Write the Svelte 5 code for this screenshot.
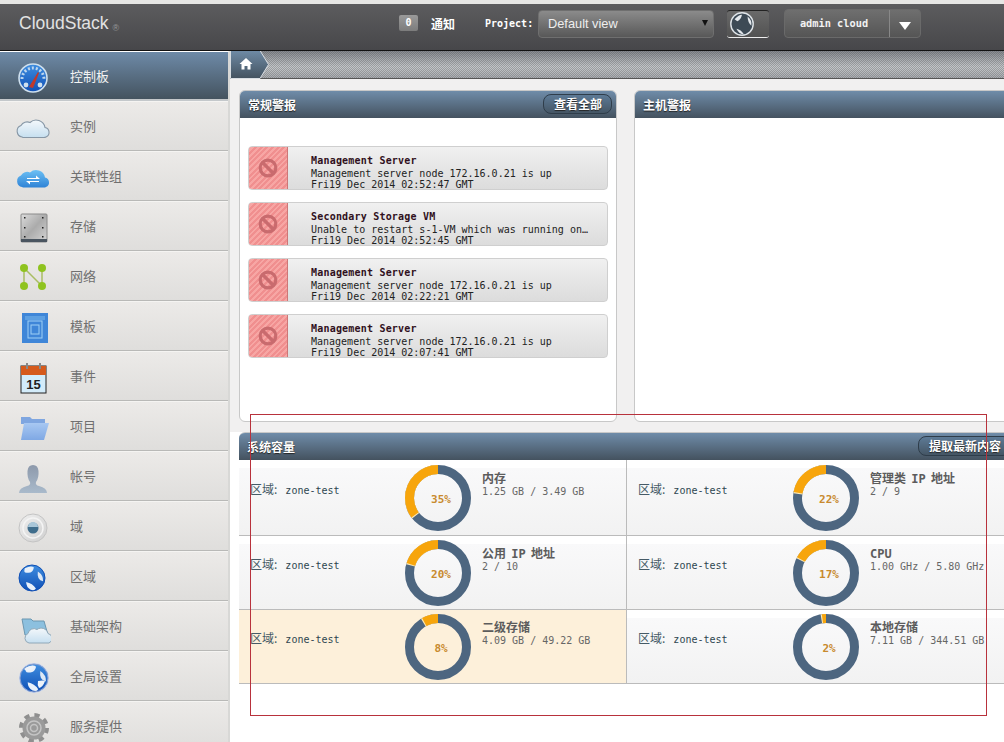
<script>
  const nav = [
    { id: "gauge", label: "控制板", active: true },
    { id: "cloud", label: "实例" },
    { id: "affinity", label: "关联性组" },
    { id: "disk", label: "存储" },
    { id: "network", label: "网络" },
    { id: "template", label: "模板" },
    { id: "calendar", label: "事件" },
    { id: "folder", label: "项目" },
    { id: "user", label: "帐号" },
    { id: "domain", label: "域" },
    { id: "region", label: "区域" },
    { id: "infra", label: "基础架构" },
    { id: "globe", label: "全局设置" },
    { id: "gear", label: "服务提供" }
  ];

  const alerts = [
    { title: "Management Server", text: "Management server node 172.16.0.21 is up", date: "Fri19 Dec 2014 02:52:47 GMT" },
    { title: "Secondary Storage VM", text: "Unable to restart s-1-VM which was running on…", date: "Fri19 Dec 2014 02:52:45 GMT" },
    { title: "Management Server", text: "Management server node 172.16.0.21 is up", date: "Fri19 Dec 2014 02:22:21 GMT" },
    { title: "Management Server", text: "Management server node 172.16.0.21 is up", date: "Fri19 Dec 2014 02:07:41 GMT" }
  ];

  const capacity = [
    { title: "内存", sub: "1.25 GB / 3.49 GB", pct: 35 },
    { title: "管理类 IP 地址", sub: "2 / 9", pct: 22 },
    { title: "公用 IP 地址", sub: "2 / 10", pct: 20 },
    { title: "CPU", sub: "1.00 GHz / 5.80 GHz", pct: 17 },
    { title: "二级存储", sub: "4.09 GB / 49.22 GB", pct: 8, warn: true },
    { title: "本地存储", sub: "7.11 GB / 344.51 GB", pct: 2 }
  ];

  const R = 28.5;
  const C = 2 * Math.PI * R;
</script>

{#snippet globeShape(cx, cy, r, rim)}
  <circle {cx} {cy} {r} fill="url(#gBlue)" stroke={rim} stroke-width="1" />
  <path d="M{cx - r * 0.55} {cy - r * 0.75}q{r * 0.5} {-r * 0.25} {r * 0.7} {-r * 0.05}q{-r * 0.1} {r * 0.45} {-r * 0.5} {r * 0.4}q{-r * 0.35} {r * 0.05} {-r * 0.2} {-r * 0.35}z" fill="#e8f0fa" />
  <path d="M{cx + r * 0.45} {cy - r * 0.5}q{r * 0.45} {r * 0.3} {r * 0.4} {r * 0.75}q{-r * 0.5} {-r * 0.1} {-r * 0.4} {-r * 0.75}z" fill="#dde8f5" />
  <path d="M{cx - r * 0.45} {cy + r * 0.3}q{r * 0.5} {r * 0.1} {r * 0.75} {r * 0.5}q{-r * 0.1} {r * 0.2} {-r * 0.4} {r * 0.1}q{-r * 0.35} {-r * 0.2} {-r * 0.35} {-r * 0.6}z" fill="#e8f0fa" />
{/snippet}

{#snippet icon(id)}
  <svg class="nav-icon" viewBox="0 0 36 36" width="36" height="36" aria-hidden="true">
    {#if id === "gauge"}
      <circle cx="18" cy="18" r="14" fill="url(#gBlue)" stroke="#cfe0ee" stroke-width="1.6" />
      <path d="M7 19a11 11 0 0 1 22 0" fill="none" stroke="#bcd6ee" stroke-width="3" stroke-dasharray="2 2" />
      <path d="M14 27l9-15 1 1-6 15z" fill="#c0392b" />
      <circle cx="11" cy="25" r="2.4" fill="#cfe0ee" />
      <circle cx="25" cy="25" r="2.4" fill="#cfe0ee" />
    {:else if id === "cloud"}
      <path d="M7 27a6 6 0 0 1-1-11.500a7 7 0 0 1 9-3a9 9 0 0 1 15 5a5 5 0 0 1 1 9.500q-1 .5-2 .5H8z" fill="url(#gCloud)" stroke="#8797a6" stroke-width="1.100" />
    {:else if id === "affinity"}
      <path d="M7 27a6 6 0 0 1-1-11.500a7 7 0 0 1 9-3a9 9 0 0 1 15 5a5 5 0 0 1 1 9.500q-1 .5-2 .5H8z" fill="url(#gSky)" />
      <path d="M12 18h9v-2.500l4 3.500H12zM24 22h-9v2.500l-4-3.500h13z" fill="#fff" />
    {:else if id === "disk"}
      <rect x="6" y="4" width="26" height="28" rx="1" fill="url(#gDisk)" stroke="#8a8a8a" />
      <rect x="6" y="29" width="26" height="3" fill="#4a5560" />
      <g fill="#222"><rect x="9" y="7" width="1.500" height="1.500" /><rect x="27" y="7" width="1.500" height="1.500" /><rect x="9" y="17" width="1.500" height="1.500" /><rect x="27" y="17" width="1.500" height="1.500" /><rect x="9" y="26" width="1.500" height="1.500" /><rect x="27" y="26" width="1.500" height="1.500" /></g>
    {:else if id === "network"}
      <path d="M9 8v18M9 8l18 18M27 8v18" stroke="#a9bd63" stroke-width="1.500" fill="none" />
      <g fill="#8fc31f"><circle cx="9" cy="8" r="4" /><circle cx="27" cy="8" r="4" /><circle cx="9" cy="26" r="4" /><circle cx="27" cy="26" r="4" /></g>
    {:else if id === "template"}
      <rect x="7" y="3" width="26" height="30" fill="#3f86d8" />
      <path d="M10 7h20M10 9h20" stroke="#8cc6f2" stroke-width=".8" />
      <rect x="13" y="11" width="14" height="17" fill="none" stroke="#9fd0f5" />
      <rect x="16" y="15" width="8" height="9" fill="none" stroke="#9fd0f5" />
    {:else if id === "calendar"}
      <rect x="6" y="6" width="25" height="27" fill="#d3ecfa" stroke="#222" />
      <rect x="6" y="6" width="25" height="9" fill="#d55a1c" />
      <rect x="11" y="3" width="2" height="6" fill="#888" />
      <rect x="24" y="3" width="2" height="6" fill="#888" />
      <text class="cal" x="18.500" y="29">15</text>
    {:else if id === "folder"}
      <path d="M6 7h9l2 2h13v5H6z" fill="#7fa6e0" />
      <path d="M9 13h25l-5 17H6z" fill="url(#gFolder)" />
    {:else if id === "user"}
      <path d="M4 33q0-5 8-7 4-1 3-4-3-4-2.500-11 .5-6 5.500-6t5.500 6q.5 7-2.500 11-1 3 3 4 8 2 8 7z" fill="url(#gUser)" />
    {:else if id === "domain"}
      <circle cx="18" cy="18" r="14" fill="url(#gDisc)" stroke="#c4c4c4" />
      <circle cx="18" cy="18" r="10" fill="none" stroke="#f4f4f4" stroke-width="1.500" />
      <circle cx="18" cy="18" r="5.500" fill="#3f6d8c" />
      <path d="M13 17a5 5 0 0 1 10 0z" fill="#a9c6d8" />
    {:else if id === "region"}
      {@render globeShape(17, 18, 13, "#0f4fb5")}
    {:else if id === "infra"}
      <path d="M7 9h9l2 2h11l4 14H10z" fill="#8cc0df" stroke="#6d97b0" />
      <path d="M14 33a5 5 0 0 1-1-9.500a6 6 0 0 1 9-4a7 7 0 0 1 11 4a5 5 0 0 1 1 9.500z" fill="url(#gCloud)" stroke="#90a8b8" />
    {:else if id === "globe"}
      <circle cx="19" cy="18" r="15" fill="#c9d6ee" />
      {@render globeShape(19, 18, 14, "#8aa0d0")}
      <path d="M9 9q6-4 10-3-1 4-4 4-2 3-6-1zM23 21q5-1 7 0-2 6-6 7-2-3-1-7z" fill="#eef3fa" />
    {:else if id === "gear"}
      <circle cx="19" cy="18" r="12.500" fill="none" stroke="#8f8f8f" stroke-width="5" stroke-dasharray="5 4.820" />
      <circle cx="19" cy="18" r="11.500" fill="#9a9a9a" />
      <circle cx="19" cy="18" r="7" fill="none" stroke="#c4c4c4" stroke-width="1.500" />
      <circle cx="19" cy="18" r="3.500" fill="none" stroke="#c4c4c4" stroke-width="1.500" />
    {/if}
  </svg>
{/snippet}

<div class="page">
  <svg class="defs" width="0" height="0" aria-hidden="true">
    <defs>
      <linearGradient id="gBlue" x1="0" y1="0" x2="0" y2="1"><stop offset="0" stop-color="#3f8ee0" /><stop offset="1" stop-color="#0f4fb5" /></linearGradient>
      <linearGradient id="gCloud" x1="0" y1="0" x2="0" y2="1"><stop offset="0" stop-color="#f4f8fb" /><stop offset="1" stop-color="#c6dff0" /></linearGradient>
      <linearGradient id="gSky" x1="0" y1="0" x2="0" y2="1"><stop offset="0" stop-color="#6cc0f4" /><stop offset="1" stop-color="#2f83d6" /></linearGradient>
      <linearGradient id="gDisk" x1="0" y1="0" x2="1" y2="1"><stop offset="0" stop-color="#dcdcdc" /><stop offset=".5" stop-color="#ababab" /><stop offset="1" stop-color="#d4d4d4" /></linearGradient>
      <linearGradient id="gFolder" x1="0" y1="0" x2="0" y2="1"><stop offset="0" stop-color="#a8c8f2" /><stop offset="1" stop-color="#7fa8e4" /></linearGradient>
      <linearGradient id="gUser" x1="0" y1="0" x2="0" y2="1"><stop offset="0" stop-color="#8d99ab" /><stop offset="1" stop-color="#a9bacb" /></linearGradient>
      <linearGradient id="gDisc" x1="0" y1="0" x2="1" y2="1"><stop offset="0" stop-color="#f0f0f0" /><stop offset="1" stop-color="#cfcfcf" /></linearGradient>
      <linearGradient id="gTab" x1="0" y1="0" x2="0" y2="1"><stop offset="0" stop-color="#6f8ba6" /><stop offset="1" stop-color="#43525f" /></linearGradient>
    </defs>
  </svg>

  <header class="topbar">
    <div class="logo">CloudStack<span class="reg">®</span></div>
    <div class="notify"><span class="badge">0</span><span class="notify-label">通知</span></div>
    <span class="project-label">Project:</span>
    <div class="select">Default view<span class="select-arrow"></span></div>
    <div class="zone-btn">
      <svg viewBox="0 0 30 30" width="28" height="28" aria-hidden="true">
        <circle cx="15" cy="15" r="12" fill="#3d4a55" stroke="#dfe4e8" stroke-width="1.500" />
        <path d="M7 10q4-5 8-5-1 5-5 7zM21 7q5 4 4 10-4-4-4-10zM9 20q5 1 8 6-5 0-8-6z" fill="#e4e8ec" />
      </svg>
    </div>
    <div class="user-btn">
      <span class="user-name">admin cloud</span>
      <span class="user-arrow"></span>
    </div>
  </header>

  <div class="layout">
    <nav class="sidebar">
      {#each nav as item}
        <div class="nav-item" class:active={item.active}>
          {@render icon(item.id)}
          <span>{item.label}</span>
        </div>
      {/each}
    </nav>

    <main class="content">
      <div class="breadcrumb">
        <svg class="home-tab" viewBox="0 0 40 29" width="40" height="29" aria-hidden="true">
          <path d="M.5 .5H30L38.500 14.500 30 28.500H.5z" fill="url(#gTab)" stroke="#d8dde2" />
          <path d="M16 8l6.500 6h-2v5.500h-3V16h-3v3.500h-3V14h-2z" fill="#fff" />
        </svg>
      </div>

      <div class="alert-panels">
        <section class="panel">
          <div class="panel-head">
            <h2>常规警报</h2>
            <button class="head-btn">查看全部</button>
          </div>
          <div class="alert-list">
            {#each alerts as a}
              <div class="alert">
                <div class="alert-flag">
                  <svg viewBox="0 0 24 24" width="22" height="22" aria-hidden="true">
                    <circle cx="12" cy="12" r="8.500" fill="none" stroke="#c96b6e" stroke-width="3.500" />
                    <path d="M6 6l12 12" stroke="#c96b6e" stroke-width="3.500" />
                  </svg>
                </div>
                <div class="alert-text">
                  <strong>{a.title}</strong>
                  <span>{a.text}</span>
                  <span>{a.date}</span>
                </div>
              </div>
            {/each}
          </div>
        </section>

        <section class="panel">
          <div class="panel-head"><h2>主机警报</h2></div>
        </section>
      </div>

      <section class="capacity">
        <div class="panel-head">
          <h2>系统容量</h2>
          <button class="head-btn">提取最新内容</button>
        </div>
        <div class="capacity-grid">
          {#each capacity as c}
            <div class="cap-cell" class:warn={c.warn}>
              <div class="cap-zone"><span class="zone-cn">区域:</span> zone-test</div>
              <svg class="donut" viewBox="0 0 66 66" width="66" height="66" role="img" aria-label="{c.pct}%">
                <circle cx="33" cy="33" r={R} fill="none" stroke="#4d6680" stroke-width="9" />
                <g transform="translate(66 0) scale(-1 1) rotate(-90 33 33)">
                  <circle cx="33" cy="33" r={R} fill="none" stroke="#fbe7b4" stroke-width="9" stroke-dasharray="{(c.pct / 100) * C + 2.2} {C}" stroke-dashoffset="1.100" />
                  <circle cx="33" cy="33" r={R} fill="none" stroke="#f7a50c" stroke-width="9" stroke-dasharray="{(c.pct / 100) * C} {C}" />
                </g>
                <text class="pct" x="36" y="38">{c.pct}%</text>
              </svg>
              <div class="cap-info">
                <h3>{c.title}</h3>
                <p>{c.sub}</p>
              </div>
            </div>
          {/each}
        </div>
      </section>
    </main>
  </div>

  <div class="marker"></div>
</div>

<style>
  :global(body) {
    margin: 0;
    background: #fff;
  }
  .page {
    position: relative;
    width: 1004px;
    height: 742px;
    overflow: hidden;
    display: flex;
    flex-direction: column;
    font-family: "DejaVu Sans Mono", "Noto Sans CJK SC", monospace;
  }
  .defs {
    position: absolute;
  }

  /* top bar */
  .topbar {
    flex: none;
    height: 46px;
    box-sizing: content-box;
    border-top: 4px solid #e6e6e4;
    border-bottom: 1px solid #111;
    background: linear-gradient(#5c5c5e, #47474a);
    display: flex;
    align-items: center;
    color: #fff;
  }
  .logo {
    margin-left: 19px;
    width: 380px;
    font: 17.5px "Liberation Sans", sans-serif;
    color: #e2e2e2;
    position: relative;
    top: -4px;
  }
  .reg {
    font-size: 9px;
    color: #999;
    margin-left: 4px;
    position: relative;
    top: 2px;
  }
  .notify {
    display: flex;
    align-items: center;
    gap: 13px;
    width: 86px;
    position: relative;
    top: -4px;
  }
  .badge {
    width: 19px;
    height: 16px;
    background: linear-gradient(#9a9a9a, #7c7c7c);
    border-radius: 2px;
    font-size: 10px;
    font-weight: bold;
    text-align: center;
    line-height: 16px;
  }
  .notify-label {
    font: bold 12px "Noto Sans CJK SC", sans-serif;
  }
  .project-label {
    width: 53px;
    font-size: 10px;
    font-weight: bold;
    position: relative;
    top: -4px;
  }
  .select {
    box-sizing: border-box;
    width: 176px;
    height: 28px;
    margin-top: -7px;
    padding-left: 9px;
    border: 1px solid #6f6f6f;
    border-radius: 4px;
    background: linear-gradient(#8b8b8b, #585858);
    font: 12.800px/26px "Liberation Sans", sans-serif;
    color: #eee;
    position: relative;
  }
  .select-arrow {
    position: absolute;
    right: 5px;
    top: 9px;
    border: 3.5px solid transparent;
    border-top: 6px solid #111;
  }
  .zone-btn {
    box-sizing: border-box;
    width: 42px;
    height: 28px;
    margin: -7px 0 0 13px;
    border-top: 1px solid #222;
    border-bottom: 1px solid #eee;
    border-radius: 3px;
    background: linear-gradient(#6a6a6a, #525252);
    display: flex;
    align-items: center;
    padding-left: 1px;
  }
  .user-btn {
    box-sizing: border-box;
    width: 137px;
    height: 29px;
    margin: -7px 0 0 15px;
    border: 1px solid #6a6a6a;
    border-radius: 4px;
    background: linear-gradient(#6f6f6f, #555);
    display: flex;
    align-items: center;
    position: relative;
  }
  .user-name {
    box-sizing: border-box;
    width: 105px;
    height: 27px;
    padding-right: 6px;
    line-height: 27px;
    text-align: center;
    font-size: 10.300px;
    font-weight: bold;
    border-right: 1px solid #888;
    color: #f2f2f2;
  }
  .user-arrow {
    margin: 5px 0 0 9px;
    border: 6px solid transparent;
    border-top: 8px solid #fff;
    border-bottom: 0;
  }

  /* sidebar */
  .layout {
    flex: 1;
    display: flex;
    min-height: 0;
  }
  .sidebar {
    flex: none;
    width: 228px;
    border-right: 2px solid #d8d8d6;
    border-top: 1px solid #fff;
  }
  .nav-item {
    box-sizing: border-box;
    height: 50px;
    padding: 3px 0 0 15px;
    display: flex;
    align-items: center;
    gap: 19px;
    background: linear-gradient(#eceae8, #dfdedc);
    border-top: 1px solid #f5f4f2;
    border-bottom: 1px solid #b9b9b7;
    font: 13px "Noto Sans CJK SC", sans-serif;
    color: #707070;
  }
  .nav-item span {
    margin-top: -4px;
  }
  .nav-item.active {
    height: 49px;
    background: linear-gradient(#6d89a6, #44535f);
    color: #f4f4f4;
    border-top-color: #6d89a6;
    border-bottom: 2px solid #c4c8cb;
  }
  .nav-icon {
    flex: none;
  }
  .cal {
    font: bold 13px "Liberation Sans", sans-serif;
    fill: #222;
    text-anchor: middle;
  }

  /* main */
  .content {
    flex: 1;
    min-width: 0;
    overflow: hidden;
    background: linear-gradient(#f1f0f0 381px, #fff 381px);
  }
  .breadcrumb {
    height: 28px;
    margin-top: -1px;
    border-bottom: 1px solid #555;
    background:
      repeating-conic-gradient(rgba(70, 70, 70, 0.3) 0 25%, transparent 0 50%) 0 0 / 2px 2px,
      linear-gradient(#80848a, #c4c7ca 60%, #a9acb0);
  }
  .home-tab {
    display: block;
  }
  .alert-panels {
    margin: 11px 0 0 9px;
    display: grid;
    grid-template-columns: 378px 400px;
    column-gap: 17px;
  }
  .panel {
    box-sizing: border-box;
    height: 332px;
    background: #fff;
    border: 1px solid #c8c8c8;
    border-radius: 6px;
    overflow: hidden;
  }
  .panel-head {
    height: 27px;
    padding: 0 4px 0 8px;
    display: flex;
    align-items: center;
    justify-content: space-between;
    background: linear-gradient(#6f8ca9, #44525f);
  }
  h2 {
    margin: 0;
    font: bold 12px "Noto Sans CJK SC", sans-serif;
    color: #fff;
    text-shadow: 0 1px 1px #222;
  }
  .head-btn {
    height: 20px;
    margin-top: -2px;
    padding: 0 9px 0 10px;
    border: 1px solid #2f3d4a;
    border-radius: 8px;
    background: linear-gradient(#5d7a96, #455665);
    font: bold 12px "Noto Sans CJK SC", sans-serif;
    color: #fff;
    text-shadow: 0 1px 1px #222;
  }
  .alert-list {
    padding: 28px 8px 0;
    display: flex;
    flex-direction: column;
    gap: 12px;
  }
  .alert {
    box-sizing: border-box;
    height: 44px;
    display: flex;
    border: 1px solid #cfcfcf;
    border-radius: 4px;
    background: linear-gradient(#f0f0f0, #dcdcdc);
    overflow: hidden;
  }
  .alert-flag {
    flex: none;
    width: 38px;
    display: flex;
    align-items: center;
    justify-content: center;
    border-right: 1px solid #c77;
    background:
      repeating-linear-gradient(135deg, #f08f8f 0 2px, #f7a6a4 2px 4px);
  }
  .alert-text {
    padding: 8px 0 0 23px;
    display: flex;
    flex-direction: column;
    font-size: 10px;
    line-height: 11.500px;
    color: #222;
    white-space: nowrap;
  }
  .alert-text strong {
    color: #301020;
    margin-bottom: 1px;
    letter-spacing: 0.2px;
  }
  .alert-text span {
    line-height: 11px;
  }

  /* capacity */
  .capacity {
    width: 776px;
    margin: 10px 0 0 9px;
    border-top: 1px solid #c8c8c8;
    border-radius: 6px 0 0 0;
    overflow: hidden;
    background: #fff;
  }
  .capacity-grid {
    display: grid;
    grid-template-columns: 388px 388px;
  }
  .cap-cell {
    box-sizing: border-box;
    height: 74px;
    display: flex;
    padding-top: 4px;
    background: linear-gradient(#fff 8px, #f9f9fa 8px, #f2f2f2);
    border-bottom: 1px solid #bbb;
  }
  .cap-cell:nth-child(odd) {
    border-right: 1px solid #bbb;
  }
  .cap-cell:nth-child(-n + 2) {
    height: 76px;
    padding-top: 5px;
  }
  .cap-cell.warn {
    background: #fdf0da;
  }
  .cap-zone {
    box-sizing: border-box;
    flex: none;
    width: 166px;
    padding: 15px 0 0 11px;
    font-size: 10px;
    color: #2d4650;
  }
  .zone-cn {
    font: 12px "Noto Sans CJK SC", sans-serif;
    color: #455a66;
    margin-right: 2px;
  }
  .donut {
    flex: none;
  }
  .pct {
    font: bold 11px "DejaVu Sans Mono", monospace;
    fill: #c88a2e;
    text-anchor: middle;
  }
  .cap-info {
    margin: 8px 0 0 11px;
    white-space: nowrap;
  }
  h3 {
    margin: 0;
    font: bold 12px/13px "DejaVu Sans Mono", "Noto Sans CJK SC", sans-serif;
    word-spacing: -2px;
    color: #5c5c5c;
  }
  p {
    margin: 0;
    font-size: 10px;
    line-height: 11px;
    color: #666;
  }

  /* annotation rectangle drawn over the screenshot */
  .marker {
    position: absolute;
    left: 250px;
    top: 414px;
    width: 735px;
    height: 300px;
    border: 1px solid #b8323c;
    pointer-events: none;
  }
</style>
